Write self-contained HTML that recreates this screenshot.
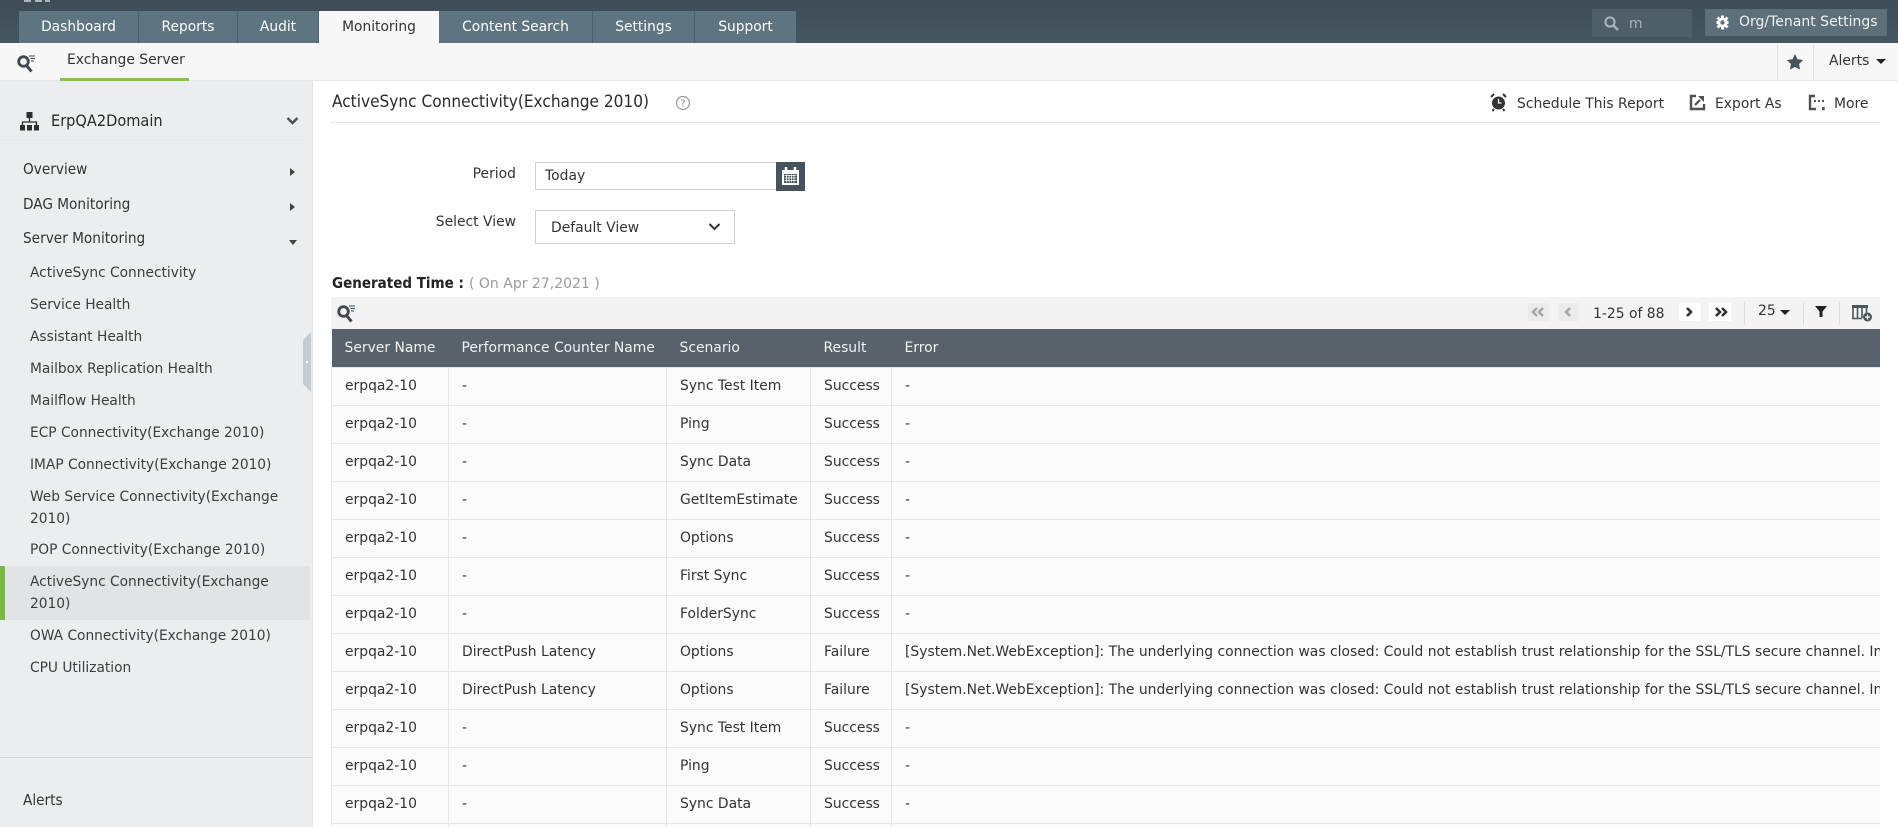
<!DOCTYPE html>
<html><head><meta charset="utf-8"><title>ActiveSync Connectivity</title>
<style>
html,body{margin:0;padding:0;background:#fff}
#r{position:relative;width:1898px;height:827px;overflow:hidden;font-family:"DejaVu Sans",sans-serif;font-size:13.9px;color:#333}
.a{position:absolute;white-space:nowrap;line-height:18px}
.b{position:absolute}
.c{font-family:"DejaVu Sans Condensed","DejaVu Sans",sans-serif;font-stretch:condensed}
.tab{position:absolute;top:11px;height:32px;line-height:33px;text-align:center;background:#5f7481;color:#fff;border-right:1px solid #4d5f6b;box-sizing:border-box;font-size:13.8px}
.nav{position:absolute;left:23px;color:#333;font-size:15.2px;line-height:18px;white-space:nowrap;font-family:"DejaVu Sans Condensed","DejaVu Sans",sans-serif;font-stretch:condensed}
.sub{position:absolute;left:30px;color:#3d3d3d;font-size:13.75px;line-height:22px;white-space:nowrap}
table{position:absolute;left:331px;top:329px;width:1549px;border-collapse:collapse;table-layout:fixed;font-size:13.9px}
th{height:38px;background:#57626a;color:#f2f2f2;font-weight:normal;text-align:left;padding:0 0 0 13px;box-sizing:border-box}
td{height:38px;background:#fbfbfb;color:#333;padding:0 0 0 13px;box-sizing:border-box;border:1px solid #e6e6e6;border-left:0;white-space:nowrap;overflow:hidden}
td:first-child{border-left:1px solid #e6e6e6}
td:last-child{border-right:0}
</style></head><body><div id="r">
<div class="b" style="left:0;top:0;width:1898px;height:43px;background:linear-gradient(#3d4c56,#465661)"></div>
<div class="b" style="left:24px;top:0;width:7px;height:2px;background:#aeb6bb"></div>
<div class="b" style="left:35px;top:0;width:7px;height:2px;background:#aeb6bb"></div>
<div class="b" style="left:45px;top:0;width:5px;height:2px;background:#aeb6bb"></div>
<div class="tab" style="left:19px;width:120px">Dashboard</div>
<div class="tab" style="left:139px;width:99px">Reports</div>
<div class="tab" style="left:238px;width:81px">Audit</div>
<div class="tab" style="left:319px;width:120px;background:#f7f7f7;color:#333;border:0">Monitoring</div>
<div class="tab" style="left:439px;width:154px">Content Search</div>
<div class="tab" style="left:593px;width:102px">Settings</div>
<div class="tab" style="left:695px;width:101px;border:0">Support</div>

<div class="b" style="left:1592px;top:9px;width:100px;height:28px;background:#4f5f6a"></div>
<svg class="b" style="left:1603px;top:15px" width="17" height="17" viewBox="0 0 17 17"><circle cx="7" cy="7" r="4.6" fill="none" stroke="#aab4bb" stroke-width="2"/><path d="M10.5 10.5L15 15" stroke="#aab4bb" stroke-width="2.4"/></svg>
<div class="a" style="left:1629px;top:15px;color:#a8b2b8">m</div>
<div class="b" style="left:1705px;top:9px;width:182px;height:27px;background:#5c6f7b"></div>
<svg class="b" style="left:1714px;top:14px" width="17" height="17" viewBox="0 0 17 17"><path d="M8.5 1.5v14M2.500 8.500h12M3.500 3.500l10 10M13.500 3.500l-10 10" stroke="#fff" stroke-width="3"/><circle cx="8.500" cy="8.500" r="5" fill="#fff"/><circle cx="8.500" cy="8.500" r="2.200" fill="#5c6f7b"/></svg>
<div class="a" style="left:1739px;top:13px;color:#f0f2f3;font-size:14px">Org/Tenant Settings</div>

<div class="b" style="left:0;top:43px;width:1898px;height:38px;background:#f7f7f7;border-bottom:1px solid #e8e8e8;box-sizing:border-box"></div>
<svg class="b" style="left:17px;top:53px" width="20" height="21" viewBox="0 0 20 21"><circle cx="6.500" cy="8.500" r="4.800" fill="none" stroke="#3f4a52" stroke-width="2.800"/><path d="M9.500 12.500L14.500 18.500" stroke="#3f4a52" stroke-width="3"/><path d="M12 3h6M13.500 5.500h4.500M14 8h3" stroke="#3f4a52" stroke-width="1.100"/></svg>
<div class="a" style="left:67px;top:51px;color:#333">Exchange Server</div>
<div class="b" style="left:60px;top:78px;width:129px;height:3px;background:#8bc04f"></div>
<div class="b" style="left:1777px;top:44px;width:1px;height:36px;background:#e2e2e2"></div>
<div class="b" style="left:1813px;top:44px;width:1px;height:36px;background:#e2e2e2"></div>
<svg class="b" style="left:1786px;top:53px" width="18" height="17" viewBox="0 0 18 17"><path d="M9 1l2.500 5.200 5.600.8-4 4 .9 5.600L9 14l-5 2.600.9-5.600-4-4 5.600-.8z" fill="#46535c"/></svg>
<div class="a" style="left:1829px;top:52px;color:#333">Alerts</div>
<div class="b" style="left:1876px;top:59px;width:0;height:0;border-left:5px solid transparent;border-right:5px solid transparent;border-top:5px solid #222"></div>

<div class="b" style="left:0;top:81px;width:313px;height:746px;background:#ebeef0;border-right:1px solid #e4e6e8;box-sizing:border-box"></div>
<div class="b" style="left:0;top:139px;width:305px;height:2px;background:#e6e9eb"></div>
<svg class="b" style="left:19px;top:111px" width="21" height="21" viewBox="0 0 21 21"><rect x="7.500" y="1" width="6" height="6" fill="#2e2e2e"/><path d="M10.500 7v4M3.500 14v-3h14v3" fill="none" stroke="#2e2e2e" stroke-width="1.300"/><rect x="1" y="14" width="5" height="5.500" fill="#2e2e2e"/><rect x="8" y="14" width="5" height="5.500" fill="#2e2e2e"/><rect x="15" y="14" width="5" height="5.500" fill="#2e2e2e"/></svg>
<div class="a c" style="left:51px;top:112px;font-size:16.2px;color:#2b2b2b">ErpQA2Domain</div>
<svg class="b" style="left:286px;top:116px" width="13" height="10" viewBox="0 0 13 10"><path d="M1.500 2l5 5 5-5" fill="none" stroke="#4a4f54" stroke-width="2.400"/></svg>

<div class="nav" style="top:160px">Overview</div>
<div class="b" style="left:290px;top:168px;width:0;height:0;border-top:4px solid transparent;border-bottom:4px solid transparent;border-left:5px solid #444"></div>
<div class="nav" style="top:195px">DAG Monitoring</div>
<div class="b" style="left:290px;top:203px;width:0;height:0;border-top:4px solid transparent;border-bottom:4px solid transparent;border-left:5px solid #444"></div>
<div class="nav" style="top:229px">Server Monitoring</div>
<div class="b" style="left:289px;top:240px;width:0;height:0;border-left:4px solid transparent;border-right:4px solid transparent;border-top:5px solid #444"></div>

<div class="sub" style="top:262px">ActiveSync Connectivity</div>
<div class="sub" style="top:294px">Service Health</div>
<div class="sub" style="top:326px">Assistant Health</div>
<div class="sub" style="top:358px">Mailbox Replication Health</div>
<div class="sub" style="top:390px">Mailflow Health</div>
<div class="sub" style="top:422px">ECP Connectivity(Exchange 2010)</div>
<div class="sub" style="top:454px">IMAP Connectivity(Exchange 2010)</div>
<div class="sub" style="top:486px">Web Service Connectivity(Exchange<br>2010)</div>
<div class="sub" style="top:539px">POP Connectivity(Exchange 2010)</div>
<div class="b" style="left:0;top:566px;width:310px;height:54px;background:#e2e3e5"></div>
<div class="b" style="left:0;top:566px;width:5px;height:54px;background:#7ab648"></div>
<div class="sub" style="top:571px">ActiveSync Connectivity(Exchange<br>2010)</div>
<div class="sub" style="top:625px">OWA Connectivity(Exchange 2010)</div>
<div class="sub" style="top:657px">CPU Utilization</div>
<div class="b" style="left:0;top:757px;width:312px;height:1px;background:#d3d6d8"></div>
<div class="nav" style="top:791px">Alerts</div>
<svg class="b" style="left:303px;top:332px" width="9" height="60" viewBox="0 0 9 60"><path d="M8 0L0 8v44l8 8z" fill="#c6cccf"/><rect x="3" y="29" width="2" height="2" fill="#fff"/></svg>

<div class="a c" style="left:332px;top:93px;font-size:17.1px;color:#2b2b2b">ActiveSync Connectivity(Exchange 2010)</div>
<svg class="b" style="left:675px;top:95px" width="16" height="16" viewBox="0 0 16 16"><circle cx="8" cy="8" r="6.500" fill="none" stroke="#9a9a9a" stroke-width="1.200"/><text x="8" y="11.500" font-size="10" text-anchor="middle" fill="#8a8a8a" font-family="DejaVu Sans,sans-serif">?</text></svg>
<svg class="b" style="left:1490px;top:92px" width="17" height="20" viewBox="0 0 17 20"><circle cx="8.500" cy="11" r="6.500" fill="#333"/><path d="M1 5l3-3M16 5l-3-3M4 17l-1.500 2M13 17l1.500 2" stroke="#333" stroke-width="2"/><path d="M8.500 7v4h3" fill="none" stroke="#fff" stroke-width="1.200"/></svg>
<div class="a" style="left:1517px;top:95px">Schedule This Report</div>
<svg class="b" style="left:1689px;top:94px" width="17" height="17" viewBox="0 0 17 17"><path d="M7 2H2v13h13v-5" fill="none" stroke="#4b5157" stroke-width="2.400"/><path d="M6 11l5-5" stroke="#4b5157" stroke-width="2.200"/><path d="M9 2h6v6z" fill="#4b5157"/></svg>
<div class="a" style="left:1715px;top:95px">Export As</div>
<svg class="b" style="left:1808px;top:94px" width="17" height="17" viewBox="0 0 17 17"><path d="M7 2H2v13h6M14 15h1.500v-2" fill="none" stroke="#4b5157" stroke-width="2.400"/><path d="M6 7h2M10 7h2M14 7h2" stroke="#4b5157" stroke-width="2"/></svg>
<div class="a" style="left:1834px;top:95px">More</div>
<div class="b" style="left:330px;top:122px;width:1550px;height:1px;background:#e6e6e6"></div>

<div class="a" style="left:332px;top:165px;width:184px;text-align:right">Period</div>
<div class="b" style="left:535px;top:162px;width:242px;height:28px;border:1px solid #cfcfcf;box-sizing:border-box;background:#fff"></div>
<div class="a" style="left:545px;top:167px">Today</div>
<div class="b" style="left:776px;top:162px;width:29px;height:29px;background:#46525c"></div>
<svg class="b" style="left:781px;top:166px" width="19" height="20" viewBox="0 0 19 20"><path d="M1 4h17v15H1z" fill="#fff"/><path d="M5 1v5M14 1v5" stroke="#fff" stroke-width="2.500"/><path d="M3 8h13v9H3z" fill="#46525c"/><path d="M3.500 9.500h12M3.500 12h12M3.500 14.500h12M5.500 8.500v8M8 8.500v8M10.500 8.500v8M13 8.500v8" stroke="#fff" stroke-width=".8"/></svg>
<div class="a" style="left:332px;top:213px;width:184px;text-align:right">Select View</div>
<div class="b" style="left:535px;top:210px;width:200px;height:34px;border:1px solid #cfcfcf;box-sizing:border-box;background:#fff"></div>
<div class="a" style="left:551px;top:219px">Default View</div>
<svg class="b" style="left:708px;top:222px" width="13" height="10" viewBox="0 0 13 10"><path d="M1.500 2l5 5 5-5" fill="none" stroke="#333" stroke-width="2"/></svg>

<div class="a c" style="left:332px;top:274px;font-weight:bold;color:#222;font-size:15px">Generated Time :</div>
<div class="a" style="left:469px;top:275px;color:#9a9a9a;font-size:14px">( On Apr 27,2021 )</div>

<div class="b" style="left:331px;top:297px;width:1549px;height:32px;background:#f3f3f3"></div>
<svg class="b" style="left:337px;top:303px" width="20" height="21" viewBox="0 0 20 21"><circle cx="6.500" cy="8.500" r="4.800" fill="none" stroke="#3f4a52" stroke-width="2.800"/><path d="M9.500 12.500L14.500 18.500" stroke="#3f4a52" stroke-width="3"/><path d="M12 3h6M13.500 5.500h4.500M14 8h3" stroke="#3f4a52" stroke-width="1.100"/></svg>
<div class="b" style="left:1528px;top:303px;width:21px;height:18px;background:#ececec"></div>
<div class="b" style="left:1558px;top:303px;width:21px;height:18px;background:#ececec"></div>
<div class="b" style="left:1679px;top:303px;width:22px;height:18px;background:#fff"></div>
<div class="b" style="left:1709px;top:303px;width:22px;height:18px;background:#fff"></div>
<svg class="b" style="left:1528px;top:303px" width="203" height="18" viewBox="0 0 203 18"><path d="M9 5L5 9l4 4M15 5l-4 4 4 4M42 5l-4 4 4 4" fill="none" stroke="#a8a8a8" stroke-width="2.600"/><path d="M159 5l4 4-4 4M188 5l4 4-4 4M194 5l4 4-4 4" fill="none" stroke="#333" stroke-width="2.600"/></svg>
<div class="a" style="left:1593px;top:305px">1-25 of 88</div>
<div class="b" style="left:1744px;top:302px;width:1px;height:23px;background:#dcdcdc"></div>
<div class="a" style="left:1758px;top:302px">25</div>
<div class="b" style="left:1780px;top:310px;width:0;height:0;border-left:5px solid transparent;border-right:5px solid transparent;border-top:5px solid #222"></div>
<div class="b" style="left:1803px;top:302px;width:1px;height:23px;background:#dcdcdc"></div>
<svg class="b" style="left:1815px;top:305px" width="12" height="13" viewBox="0 0 12 13"><path d="M0 1h12L7.500 6.500V12h-3V6.500z" fill="#222"/></svg>
<div class="b" style="left:1839px;top:302px;width:1px;height:23px;background:#dcdcdc"></div>
<svg class="b" style="left:1851px;top:304px" width="22" height="18" viewBox="0 0 22 18"><path d="M1 2.500h16M2 3v11M6.500 3v11M11 3v11M15.500 3v7M1 14.500h10" fill="none" stroke="#4c555c" stroke-width="1.600"/><path d="M1 1h16v3H1z" fill="#4c555c"/><circle cx="16.500" cy="13" r="4.500" fill="#4c555c"/><path d="M14 13h5M16.500 10.500v5" stroke="#fff" stroke-width="1.200"/></svg>

<table>
<colgroup><col style="width:117px"><col style="width:218px"><col style="width:144px"><col style="width:81px"><col></colgroup>
<tr><th>Server Name</th><th>Performance Counter Name</th><th>Scenario</th><th>Result</th><th>Error</th></tr>
<tr><td>erpqa2-10</td><td>-</td><td>Sync Test Item</td><td>Success</td><td>-</td></tr>
<tr><td>erpqa2-10</td><td>-</td><td>Ping</td><td>Success</td><td>-</td></tr>
<tr><td>erpqa2-10</td><td>-</td><td>Sync Data</td><td>Success</td><td>-</td></tr>
<tr><td>erpqa2-10</td><td>-</td><td>GetItemEstimate</td><td>Success</td><td>-</td></tr>
<tr><td>erpqa2-10</td><td>-</td><td>Options</td><td>Success</td><td>-</td></tr>
<tr><td>erpqa2-10</td><td>-</td><td>First Sync</td><td>Success</td><td>-</td></tr>
<tr><td>erpqa2-10</td><td>-</td><td>FolderSync</td><td>Success</td><td>-</td></tr>
<tr><td>erpqa2-10</td><td>DirectPush Latency</td><td>Options</td><td>Failure</td><td>[System.Net.WebException]: The underlying connection was closed: Could not establish trust relationship for the SSL/TLS secure channel. Inner exception</td></tr>
<tr><td>erpqa2-10</td><td>DirectPush Latency</td><td>Options</td><td>Failure</td><td>[System.Net.WebException]: The underlying connection was closed: Could not establish trust relationship for the SSL/TLS secure channel. Inner exception</td></tr>
<tr><td>erpqa2-10</td><td>-</td><td>Sync Test Item</td><td>Success</td><td>-</td></tr>
<tr><td>erpqa2-10</td><td>-</td><td>Ping</td><td>Success</td><td>-</td></tr>
<tr><td>erpqa2-10</td><td>-</td><td>Sync Data</td><td>Success</td><td>-</td></tr>
<tr><td>erpqa2-10</td><td>-</td><td>GetItemEstimate</td><td>Success</td><td>-</td></tr>
</table>
</div></body></html>
